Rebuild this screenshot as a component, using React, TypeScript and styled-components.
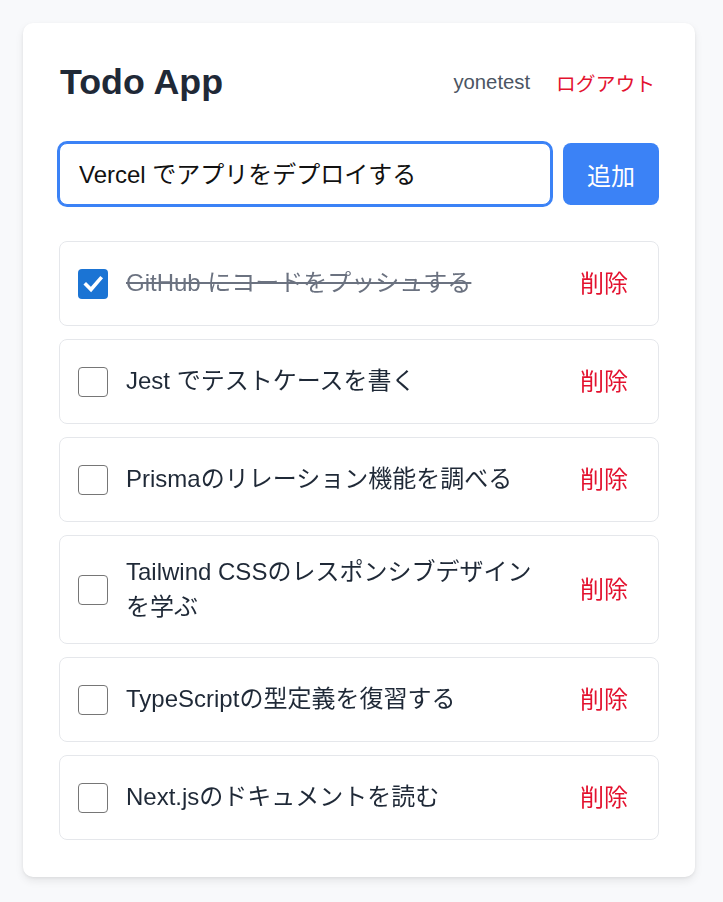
import React, { useEffect, useRef, useState } from "react";
import styled, { createGlobalStyle } from "styled-components";

const GlobalStyle = createGlobalStyle`
  body {
    margin: 0;
    background: #f8f9fb;
    font-family: "Liberation Sans", "Noto Sans CJK JP", sans-serif;
  }
  * {
    box-sizing: border-box;
  }
`;

const Page = styled.div`
  padding: 23px 23px 25px;
`;

const Card = styled.div`
  width: 672px;
  background: #ffffff;
  border-radius: 10px;
  box-shadow: 0 4px 8px rgba(0, 0, 0, 0.08), 0 1px 3px rgba(0, 0, 0, 0.06);
  padding: 36px 36px 37px;
`;

const Header = styled.div`
  display: flex;
  justify-content: space-between;
  align-items: center;
  height: 46px;
`;

const Title = styled.h1`
  margin: 0 0 0 1px;
  font-size: 35.8px;
  font-weight: 700;
  color: #1f2937;
  line-height: 46px;
`;

const UserArea = styled.div`
  display: flex;
  align-items: center;
  gap: 26px;
  font-size: 20.3px;
`;

const UserName = styled.span`
  color: #4b5563;
`;

const LinkButton = styled.button`
  border: none;
  background: none;
  padding: 0 4px 0 0;
  font-family: inherit;
  font-size: 19.8px;
  color: #e3122f;
  cursor: pointer;
`;

const Form = styled.form`
  display: flex;
  gap: 12px;
  margin-top: 38px;
`;

const Input = styled.input`
  flex: 1;
  height: 62px;
  border: 1px solid #3b82f6;
  border-radius: 8px;
  box-shadow: 0 0 0 2px #3b82f6;
  padding: 0 19px 3px;
  font-family: inherit;
  font-size: 24px;
  color: #111111;
  caret-color: #111111;
  outline: none;
`;

const AddButton = styled.button`
  width: 96px;
  height: 62px;
  border: none;
  border-radius: 8px;
  background: #3b82f6;
  color: #ffffff;
  font-family: inherit;
  font-size: 24px;
  cursor: pointer;
`;

const List = styled.ul`
  list-style: none;
  margin: 36px 0 0;
  padding: 0;
  display: flex;
  flex-direction: column;
  gap: 13px;
`;

const Item = styled.li`
  display: flex;
  align-items: center;
  border: 1px solid #e5e7eb;
  border-radius: 8px;
  padding: 19px 18px;
`;

const Box = styled.span<{ $checked: boolean }>`
  flex: none;
  width: 30px;
  height: 30px;
  border-radius: 4px;
  border: ${(p) => (p.$checked ? "none" : "1.5px solid #767676")};
  background: ${(p) => (p.$checked ? "#1b74d4" : "#ffffff")};
  display: flex;
  align-items: center;
  justify-content: center;
  margin-right: 18px;
  cursor: pointer;
`;

const Label = styled.span<{ $done: boolean }>`
  flex: 1;
  font-size: 24px;
  line-height: 34.5px;
  color: ${(p) => (p.$done ? "#6b7280" : "#1f2937")};
  text-decoration: ${(p) => (p.$done ? "line-through" : "none")};
`;

const DeleteButton = styled.button`
  flex: none;
  margin-left: 20px;
  border: none;
  background: none;
  padding: 6px 12px 6px 11px;
  font-family: inherit;
  font-size: 24px;
  line-height: 33px;
  color: #e3122f;
  cursor: pointer;
`;

type Todo = {
  id: number;
  title: string;
  done: boolean;
};

const initialTodos: Todo[] = [
  { id: 1, title: "GitHub にコードをプッシュする", done: true },
  { id: 2, title: "Jest でテストケースを書く", done: false },
  { id: 3, title: "Prismaのリレーション機能を調べる", done: false },
  { id: 4, title: "Tailwind CSSのレスポンシブデザインを学ぶ", done: false },
  { id: 5, title: "TypeScriptの型定義を復習する", done: false },
  { id: 6, title: "Next.jsのドキュメントを読む", done: false },
];

const Check = () => (
  <svg width="22" height="22" viewBox="0 0 22 22">
    <path
      d="M4 11.5 L9 16.5 L18.5 5.5"
      fill="none"
      stroke="#ffffff"
      strokeWidth="3.6"
      strokeLinecap="square"
      strokeLinejoin="miter"
    />
  </svg>
);

const App = () => {
  const [todos, setTodos] = useState(initialTodos);
  const [text, setText] = useState("Vercel でアプリをデプロイする");
  const inputRef = useRef<HTMLInputElement>(null);

  useEffect(() => {
    const el = inputRef.current;
    if (el) {
      el.focus();
      el.setSelectionRange(el.value.length, el.value.length);
    }
  }, []);

  const toggle = (id: number) =>
    setTodos((ts) => ts.map((t) => (t.id === id ? { ...t, done: !t.done } : t)));

  const remove = (id: number) => setTodos((ts) => ts.filter((t) => t.id !== id));

  return (
    <Page>
      <GlobalStyle />
      <Card>
        <Header>
          <Title>Todo App</Title>
          <UserArea>
            <UserName>yonetest</UserName>
            <LinkButton>ログアウト</LinkButton>
          </UserArea>
        </Header>

        <Form onSubmit={(e) => e.preventDefault()}>
          <Input ref={inputRef} value={text} onChange={(e) => setText(e.target.value)} />
          <AddButton type="submit">追加</AddButton>
        </Form>

        <List>
          {todos.map((t) => (
            <Item key={t.id}>
              <Box $checked={t.done} onClick={() => toggle(t.id)}>
                {t.done && <Check />}
              </Box>
              <Label $done={t.done}>{t.title}</Label>
              <DeleteButton onClick={() => remove(t.id)}>削除</DeleteButton>
            </Item>
          ))}
        </List>
      </Card>
    </Page>
  );
};

export default App;
